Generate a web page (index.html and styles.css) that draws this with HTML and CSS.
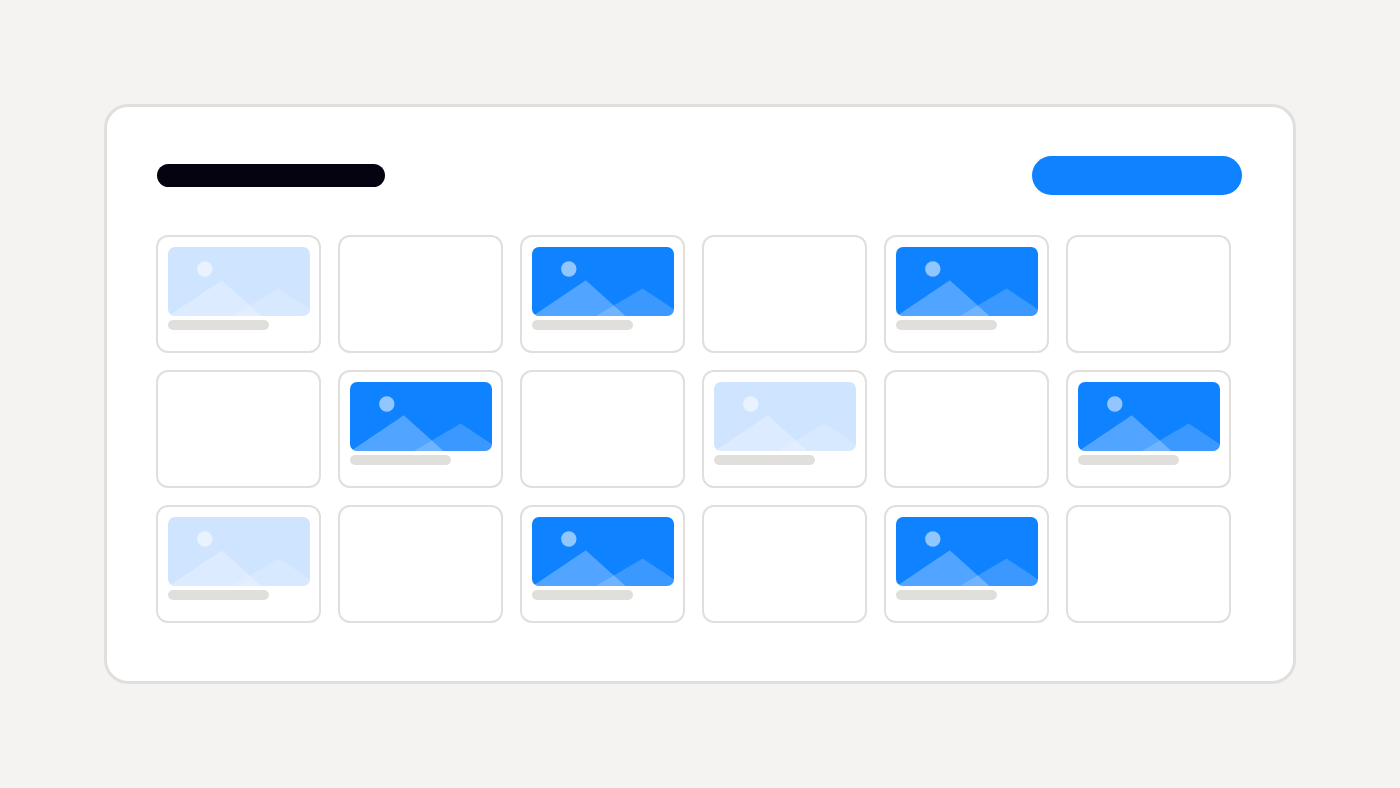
FILE: index.html
```html
<!DOCTYPE html>
<html lang="en">
<head>
<meta charset="utf-8">
<meta name="viewport" content="width=device-width, initial-scale=1">
<title>Gallery</title>
<link rel="stylesheet" href="styles.css">
</head>
<body>
<svg class="defs" aria-hidden="true">
  <symbol id="landscape" viewBox="0 0 142 69" preserveAspectRatio="none">
    <circle cx="36.8" cy="22" r="7.7" fill="#fff" fill-opacity=".55"/>
    <path d="M0 69.5 53.8 33.2 94 69.5Z" fill="#fff" fill-opacity=".28"/>
    <path d="M63 69.5 110.6 41.6 153 69.5Z" fill="#fff" fill-opacity=".18"/>
  </symbol>
</svg>
<main class="panel">
  <header class="panel-header">
    <div class="title-bar"></div>
    <button class="action" type="button" aria-label="Action"></button>
  </header>
  <section class="grid">
    <article class="card"><svg class="thumb thumb-light"><use href="#landscape"/></svg><div class="caption"></div></article>
    <article class="card"></article>
    <article class="card"><svg class="thumb"><use href="#landscape"/></svg><div class="caption"></div></article>
    <article class="card"></article>
    <article class="card"><svg class="thumb"><use href="#landscape"/></svg><div class="caption"></div></article>
    <article class="card"></article>

    <article class="card"></article>
    <article class="card"><svg class="thumb"><use href="#landscape"/></svg><div class="caption"></div></article>
    <article class="card"></article>
    <article class="card"><svg class="thumb thumb-light"><use href="#landscape"/></svg><div class="caption"></div></article>
    <article class="card"></article>
    <article class="card"><svg class="thumb"><use href="#landscape"/></svg><div class="caption"></div></article>

    <article class="card"><svg class="thumb thumb-light"><use href="#landscape"/></svg><div class="caption"></div></article>
    <article class="card"></article>
    <article class="card"><svg class="thumb"><use href="#landscape"/></svg><div class="caption"></div></article>
    <article class="card"></article>
    <article class="card"><svg class="thumb"><use href="#landscape"/></svg><div class="caption"></div></article>
    <article class="card"></article>
  </section>
</main>
</body>
</html>
```
FILE: styles.css
```css
* {
  box-sizing: border-box;
}

body {
  margin: 0;
  min-height: 100vh;
  padding: 104px;
  background: #f5f3f2;
  font-family: Inter, "Liberation Sans", sans-serif;
}

.defs {
  display: none;
}

.panel {
  padding: 49px 51px 58px 49px;
  border: 3px solid #e0dfdd;
  border-radius: 24px;
  background: #fff;
}

.panel-header {
  display: flex;
  align-items: center;
  justify-content: space-between;
  margin-bottom: 40px;
  padding-left: 1px;
}

.title-bar {
  width: 228px;
  height: 23px;
  border-radius: 12px;
  background: #04030f;
}

.action {
  width: 210px;
  height: 39px;
  padding: 0;
  border: 0;
  border-radius: 20px;
  background: #0f82ff;
  cursor: pointer;
}

.grid {
  display: grid;
  grid-template-columns: repeat(6, minmax(0, 1fr));
  gap: 17px;
  padding-right: 11px;
}

.card {
  display: flex;
  flex-direction: column;
  gap: 4px;
  min-height: 118px;
  padding: 10px 9px 10px 10px;
  border: 2px solid #e0dfdc;
  border-radius: 12px;
  background: #fff;
}

.thumb {
  display: block;
  width: 100%;
  height: 69px;
  border-radius: 7px;
  background: #0f82ff;
}

.thumb-light {
  background: #cfe4ff;
}

.caption {
  width: 71%;
  height: 10px;
  border-radius: 5px;
  background: #e0dfdb;
}
```
